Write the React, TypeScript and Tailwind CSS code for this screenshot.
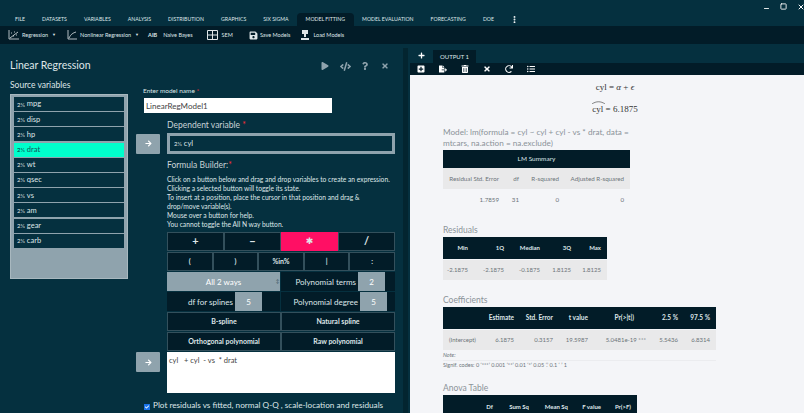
import { Minus, Square, X, EllipsisVertical } from 'lucide-react'
import { FaArrowRight, FaCheck, FaCode, FaFileExport, FaListUl, FaPlay, FaPlus, FaPlusSquare, FaQuestion, FaRedo, FaSave, FaTimes, FaTrashAlt } from 'react-icons/fa'
import clsx from 'clsx'

const tabs = ['FILE', 'DATASETS', 'VARIABLES', 'ANALYSIS', 'DISTRIBUTION', 'GRAPHICS', 'SIX SIGMA', 'MODEL FITTING', 'MODEL EVALUATION', 'FORECASTING', 'DOE']
const vars = ['mpg', 'disp', 'hp', 'drat', 'wt', 'qsec', 'vs', 'am', 'gear', 'carb']

function NumIcon({ dark }: { dark?: boolean }) {
  return <span className={clsx('text-[6px] mr-[2px]', dark ? 'text-[#0b2b35]' : 'text-[#e4eaec]')}>2⅓</span>
}

function FBtn({ label, className }: { label: string; className?: string }) {
  return (
    <div className={clsx('flex items-center justify-center border text-[#dfe6e8] h-full font-bold', className ?? 'bg-[#021c28] border-[#33505c]')}>
      {label}
    </div>
  )
}

function Stepper({ label, value, labelW }: { label: string; value: string; labelW: string }) {
  return (
    <div className="flex items-center bg-[#021c28] h-full flex-1 text-[8px] text-[#dfe6e8]">
      <span className={clsx('text-right pr-0.5 whitespace-nowrap', labelW)}>{label}</span>
      <span className="w-[27px] h-full flex items-center justify-center bg-[#8fa3ad] text-white">{value}</span>
    </div>
  )
}

export default function App() {
  return (
    <div className="w-[804px] h-[413px] overflow-hidden flex flex-col bg-[#05303f] font-['Lato','Liberation_Sans',sans-serif]">
      {/* window bar */}
      <div className="h-[13px] shrink-0 flex items-center justify-end gap-[10px] -mr-[1px] text-white">
        <Minus size={7} strokeWidth={3} className="mt-1" />
        <Square size={7} strokeWidth={3} />
        <X size={8} strokeWidth={3} />
      </div>

      {/* menu tabs */}
      <div className="h-[13px] shrink-0 flex items-stretch pl-[6.5px] text-[5.2px] text-[#dfe6e8]">
        {tabs.map((t) => (
          <div key={t} className={clsx('px-[8.5px] flex items-center', t === 'MODEL FITTING' && 'bg-[#021c28] rounded-t-sm')}>{t}</div>
        ))}
        <EllipsisVertical size={9} strokeWidth={3} className="self-center ml-2 text-white" />
      </div>

      {/* toolbar */}
      <div className="h-[18px] shrink-0 flex items-center bg-[#021c28] text-[5.5px] text-[#dfe6e8] pl-2">
        <svg width="11" height="10" viewBox="0 0 11 10" fill="none" stroke="#dfe6e8" strokeWidth="0.8"><path d="M1 0v9h10M2 8l8-6" /><path d="M3 3h1M6 2h1M5 6h1M8 5h1" /></svg>
        <span className="ml-[3px]">Regression</span>
        <span className="ml-1 text-[4px]">▼</span>
        <svg className="ml-[11px]" width="10" height="10" viewBox="0 0 10 10" fill="none" stroke="#dfe6e8" strokeWidth="0.8"><path d="M1 0v9h9M2 8c2-4 4-5 7-6" /></svg>
        <span className="ml-[3px]">Nonlinear Regression</span>
        <span className="ml-1 text-[4px]">▼</span>
        <span className="ml-[9px] font-bold">AIB</span>
        <span className="ml-[6px]">Naive Bayes</span>
        <svg className="ml-[14px]" width="11" height="10" viewBox="0 0 11 10" fill="none" stroke="#dfe6e8" strokeWidth="1"><path d="M.5.5h10v9H.5zM5.5.5v9M.5 5h10" /></svg>
        <span className="ml-1">SEM</span>
        <FaSave size={9} className="ml-[16px]" />
        <span className="ml-[2px]">Save Models</span>
        <svg className="ml-[11px]" width="8" height="10" viewBox="0 0 8 10" fill="#dfe6e8"><path d="M1 0h6v4H5v3H3V4H1zM0 8h8v2H0z" /></svg>
        <span className="ml-[4px]">Load Models</span>
      </div>

      <div className="flex-1 flex min-h-0">
        {/* left dialog */}
        <div className="w-[403px] shrink-0 text-[#dfe6e8] relative">
          <div className="flex items-center pl-[10px] pt-[13px] h-[31px]">
            <span className="text-[10.5px]">Linear Regression</span>
            <div className="ml-auto flex items-center pr-[8px] text-[#8fa3ad]">
              <span className="w-[20px] flex justify-center"><FaPlay size={8} /></span>
              <span className="w-[20px] flex justify-center"><FaCode size={11} /></span>
              <span className="w-[20px] flex justify-center"><FaQuestion size={8} /></span>
              <span className="w-[20px] flex justify-center"><FaTimes size={8} /></span>
            </div>
          </div>

          <div className="flex pl-[10px]">
            <div className="w-[118px] shrink-0">
              <div className="text-[8.5px] leading-[12px] mt-1 mb-[3px]">Source variables</div>
              <div className="h-[185px] bg-[#8fa3ad] p-[2px] border border-[#a8b8bf]">
                <div className="flex flex-col gap-[1.2px] px-[1px]">
                  {vars.map((v) => (
                    <div key={v} className={clsx('h-[14px] flex items-center pl-[3px] text-[7.5px]', v === 'drat' ? 'bg-[#00ffcc] text-[#16505a]' : 'bg-[#05303f] text-[#dfe6e8]')}>
                      <NumIcon dark={v === 'drat'} />
                      {v}
                    </div>
                  ))}
                </div>
              </div>
            </div>

            <div className="flex-1 mt-[11px] pl-[8px]">
              <div className="text-[6.5px] pl-[7px] leading-[9px]">Enter model name <span className="text-red-500">*</span></div>
              <div className="ml-[8px] mt-[3px] w-[188px] h-[15px] bg-white text-[#444] text-[8px] flex items-center pl-[2px]">LinearRegModel1</div>

              <div className="pl-[31px] mt-[6px] text-[8.5px] leading-[12px] text-[#c9d3d7]">Dependent variable <span className="text-red-500">*</span></div>
              <div className="flex items-center gap-[7px] mt-[2px]">
                <div className="w-[24px] h-[20px] bg-[#8fa3ad] rounded-[1px] flex items-center justify-center text-white"><FaArrowRight size={7} /></div>
                <div className="w-[228px] h-[21px] border-[3px] border-[#8fa3ad] bg-[#05303f] flex items-center pl-1 text-[7.5px]"><NumIcon />cyl</div>
              </div>

              <div className="pl-[31px] mt-[6px]">
                <div className="text-[8.5px] leading-[11px] text-[#c9d3d7]">Formula Builder:<span className="text-red-500">*</span></div>
                <div className="text-[6.7px] leading-[9px] mt-[4px] w-[228px]">
                  Click on a button below and drag and drop variables to create an expression.<br />
                  Clicking a selected button will toggle its state.<br />
                  To insert at a position, place the cursor in that position and drag &amp;<br />
                  drop/move variable(s).<br />
                  Mouse over a button for help.<br />
                  You cannot toggle the All N way button.
                </div>

                <div className="w-[228px] mt-[3px] flex flex-col gap-[1px]">
                  <div className="h-[19px] grid grid-cols-4 text-[11px]">
                    <FBtn label="+" />
                    <FBtn label="−" />
                    <FBtn label="✱" className="bg-[#ff0f64] border-[#ff0f64] text-[9px] font-normal font-['DejaVu_Sans',sans-serif]" />
                    <FBtn label="/" />
                  </div>
                  <div className="h-[19px] grid grid-cols-5 text-[7px]">
                    <FBtn label="(" />
                    <FBtn label=")" />
                    <FBtn label="%in%" />
                    <FBtn label="|" />
                    <FBtn label=":" />
                  </div>
                  <div className="h-[19px] flex gap-[1px]">
                    <div className="w-[113px] h-full bg-[#8fa3ad] text-white text-[8px] flex items-center justify-center relative">
                      All 2 ways
                      <span className="absolute right-[0.5px] text-[5px] leading-[5px] text-[#33505c]">↕</span>
                    </div>
                    <Stepper label="Polynomial terms" value="2" labelW="w-[77px]" />
                  </div>
                  <div className="h-[19px] flex gap-[1px]">
                    <div className="w-[113px] shrink-0 flex items-center bg-[#021c28] h-full text-[8px] text-[#dfe6e8]">
                      <span className="w-[68px] text-right pr-0.5">df for splines</span>
                      <span className="w-[27px] h-full flex items-center justify-center bg-[#8fa3ad] text-white">5</span>
                    </div>
                    <Stepper label="Polynomial degree" value="5" labelW="w-[79px]" />
                  </div>
                  <div className="h-[19px] grid grid-cols-2 text-[7px]">
                    <FBtn label="B-spline" />
                    <FBtn label="Natural spline" />
                  </div>
                  <div className="h-[19px] grid grid-cols-2 text-[7px]">
                    <FBtn label="Orthogonal polynomial" />
                    <FBtn label="Raw polynomial" />
                  </div>
                </div>
              </div>

              <div className="flex gap-[7px] mt-[1px]">
                <div className="w-[24px] h-[20px] bg-[#8fa3ad] rounded-[1px] flex items-center justify-center text-white"><FaArrowRight size={7} /></div>
                <div className="w-[228px] h-[41px] bg-white text-[#444] text-[7.5px] pl-[2px] pt-[3px] whitespace-pre">{'cyl   + cyl  - vs  * drat'}</div>
              </div>
            </div>
          </div>

          <div className="absolute left-[144px] top-[355px] flex items-center gap-[3px] text-[8.2px] leading-[10px] whitespace-nowrap">
            <span className="w-[6px] h-[6px] bg-[#1a73e8] mt-[5px] shrink-0 flex items-center justify-center text-white"><FaCheck size={4} /></span>
            Plot residuals vs fitted, normal Q-Q , scale-location and residuals
          </div>
        </div>

        {/* splitter */}
        <div className="w-[5px] shrink-0 mt-[4px] bg-[#032530]" />

        {/* output */}
        <div className="flex-1 min-w-0 flex flex-col pl-[2px]">
          <div className="h-[19px] shrink-0 flex items-end pl-[8px] text-[#dfe6e8]">
            <FaPlus size={7} className="mb-[4px] text-white" />
            <div className="ml-[8px] w-[43px] h-[13px] bg-[#021c28] flex items-center justify-center text-[6px]">OUTPUT 1</div>
          </div>
          <div className="h-[12px] shrink-0 bg-[#021c28] flex items-center pl-[7px] gap-[14px] text-white">
            <FaPlusSquare size={8} />
            <FaFileExport size={8} />
            <FaTrashAlt size={8} />
            <FaTimes size={8} />
            <FaRedo size={8} />
            <FaListUl size={8} />
          </div>

          <div className="flex-1 min-h-0 overflow-hidden bg-[#f4f5f8] pl-[33px] text-[#6c7479]">
            <div className="w-[340px] flex flex-col items-center font-['Liberation_Serif',serif] text-[#333] text-[9px] pt-[6px] pl-[4px]">
              <div className="leading-[12px]">cyl = <i>α</i> + <i>ϵ</i></div>
              <div className="leading-[12px] mt-[10px] relative">
                <svg className="absolute left-0 -top-[2px]" width="13" height="3" viewBox="0 0 13 3" fill="none" stroke="#333" strokeWidth="0.6"><path d="M0 3C4 0 9 0 13 3" /></svg>
                cyl = 6.1875
              </div>
            </div>

            <div className="text-[8.2px] leading-[10.5px] text-[#8b9398] w-[190px] mt-[12px]">Model: lm(formula = cyl ~ cyl + cyl - vs * drat, data = mtcars, na.action = na.exclude)</div>

            <table className="w-[187px] mt-[2px] table-fixed text-[6.2px] text-[#6c7479] text-right whitespace-nowrap">
              <colgroup>
                <col className="w-[58px]" />
                <col className="w-[20px]" />
                <col className="w-[39px]" />
                <col />
              </colgroup>
              <tbody>
                <tr className="bg-[#021c28] text-[#dfe6e8] h-[18px]"><td colSpan={4} className="text-center text-[6.5px]">LM Summary</td></tr>
                <tr className="bg-[#e9e9ea] h-[21px]">
                  <td className="pr-[2px]">Residual Std. Error</td><td className="pr-[2px]">df</td><td className="pr-[1px]">R-squared</td><td className="pr-[6px]">Adjusted R-squared</td>
                </tr>
                <tr className="h-[21px]">
                  <td className="pr-[2px]">1.7859</td><td className="pr-[2px]">31</td><td className="pr-[1px]">0</td><td className="pr-[6px]">0</td>
                </tr>
              </tbody>
            </table>

            <div className="text-[8.5px] leading-[10px] text-[#8b9398] mt-[15px]">Residuals</div>
            <table className="w-[164px] mt-[2px] table-fixed text-[6px] text-right">
              <tbody>
                <tr className="bg-[#021c28] text-[#dfe6e8] h-[22px] font-bold border-b border-[#f4f5f8]">
                  <td className="w-[31px] pr-[6px]">Min</td><td className="w-[33px] pr-[3px]">1Q</td><td className="w-[36px] pr-[3px]">Median</td><td className="w-[32px] pr-[4px]">3Q</td><td className="pr-[6px]">Max</td>
                </tr>
                <tr className="bg-[#e9e9ea] h-[21px]">
                  <td className="pr-[6px]">-2.1875</td><td className="pr-[3px]">-2.1875</td><td className="pr-[3px]">-0.1875</td><td className="pr-[4px]">1.8125</td><td className="pr-[6px]">1.8125</td>
                </tr>
              </tbody>
            </table>

            <div className="text-[8.5px] leading-[10px] text-[#8b9398] mt-[15px]">Coefficients</div>
            <table className="w-[273px] mt-[2px] table-fixed text-[6px] text-right">
              <tbody>
                <tr className="bg-[#021c28] text-[#dfe6e8] h-[22px] text-[6.5px] font-bold border-b border-[#f4f5f8]">
                  <td className="w-[39px]" /><td className="w-[33px] pr-[1px]">Estimate</td><td className="w-[39px] pr-[1px]">Std. Error</td><td className="w-[35px] pr-[1px]">t value</td><td className="w-[57px] pr-[12px]">Pr(&gt;|t|)</td><td className="w-[39px] pr-[7px]">2.5 %</td><td className="pr-[6px]">97.5 %</td>
                </tr>
                <tr className="bg-[#e9e9ea] h-[21px]">
                  <td className="pl-[6px] text-left whitespace-nowrap">(Intercept)</td><td className="pr-[1px]">6.1875</td><td className="pr-[1px]">0.3157</td><td className="pr-[1px]">19.5987</td><td className="whitespace-nowrap">5.0481e-19 ***</td><td className="pr-[7px]">5.5436</td><td className="pr-[6px]">6.8314</td>
                </tr>
              </tbody>
            </table>
            <div className="text-[5.5px] leading-[9px] mt-[1px] w-[273px] border-b border-[#ebecef] italic">Note:</div>
            <div className="text-[5.5px] leading-[8px]">Signif. codes: 0 ‘***’ 0.001 ‘**’ 0.01 ‘*’ 0.05 ‘.’ 0.1 ‘ ’ 1</div>

            <div className="text-[8.5px] leading-[10px] text-[#8b9398] mt-[14px]">Anova Table</div>
            <table className="w-[194px] mt-[2px] table-fixed text-[6px] text-right">
              <tbody>
                <tr className="bg-[#021c28] text-[#dfe6e8] h-[22px] font-bold">
                  <td className="w-[51px] pr-[1px]">Df</td><td className="w-[38px] pr-[3px]">Sum Sq</td><td className="w-[39px] pr-[3px]">Mean Sq</td><td className="w-[33px] pr-[3px]">F value</td><td className="pr-[6px]">Pr(&gt;F)</td>
                </tr>
              </tbody>
            </table>
          </div>
        </div>
      </div>
    </div>
  )
}
